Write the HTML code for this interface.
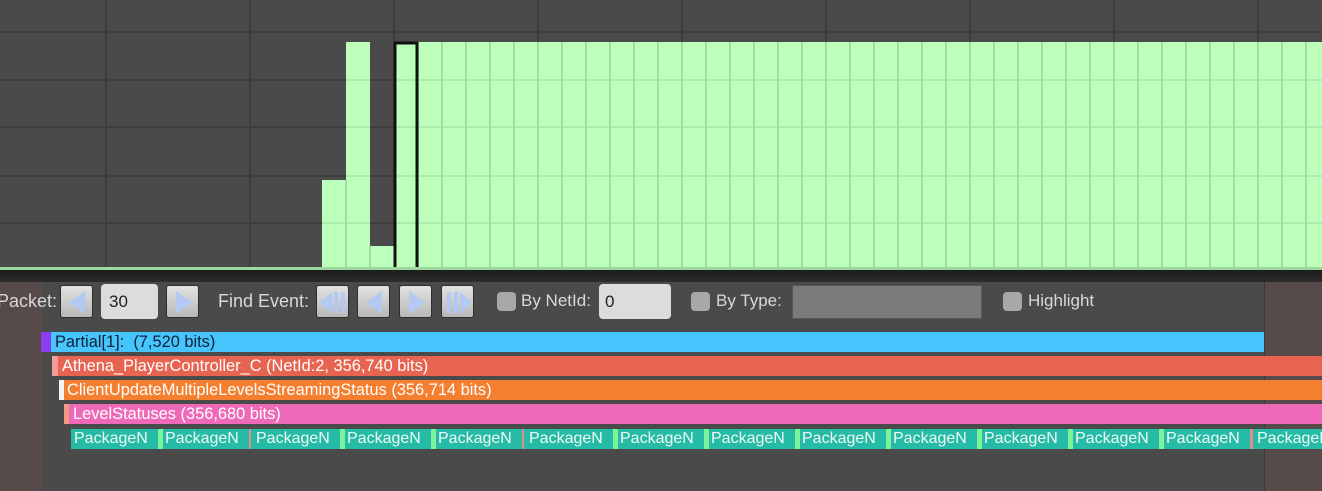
<!DOCTYPE html>
<html><head><meta charset="utf-8"><style>
*{margin:0;padding:0;box-sizing:border-box}
body{width:1322px;height:491px;overflow:hidden;background:#4a4a4a;position:relative;font-family:"Liberation Sans",sans-serif}
.a{position:absolute}
.t{position:absolute;color:#d8d8d8;font-size:17px;top:291px;white-space:nowrap}
.btn{position:absolute;top:285px;width:33px;height:33px;border-radius:3px;background:linear-gradient(#e2e2e2,#b8b8b8);border:1px solid #2e2e2e}
.btn svg{position:absolute;left:0;top:0}
.cb{position:absolute;top:292px;width:19px;height:19px;border-radius:4px;background:#a8a8a8}
.bar{position:absolute;height:20px;font-size:16.4px;line-height:20px;white-space:nowrap;color:#fff}
.pk{position:absolute;top:429px;height:20px;font-size:16px;line-height:20px;color:#eefaf6}
</style></head><body>
<svg class="a" style="left:0;top:0" width="1322" height="270">
<defs><clipPath id="bc">
<rect x="322" y="180" width="24" height="90"/>
<rect x="346" y="42" width="24" height="228"/>
<rect x="370" y="246" width="24" height="24"/>
<rect x="394" y="42" width="928" height="228"/>
</clipPath></defs>
<rect width="1322" height="270" fill="#4a4a4a"/>
<g stroke="#3e3e3e" stroke-width="2">
<line x1="0" y1="32" x2="1322" y2="32"/><line x1="0" y1="80" x2="1322" y2="80"/><line x1="0" y1="127" x2="1322" y2="127"/><line x1="0" y1="176" x2="1322" y2="176"/><line x1="0" y1="223" x2="1322" y2="223"/>
<line x1="106" y1="0" x2="106" y2="270"/><line x1="250" y1="0" x2="250" y2="270"/><line x1="394" y1="0" x2="394" y2="270"/><line x1="538" y1="0" x2="538" y2="270"/><line x1="682" y1="0" x2="682" y2="270"/><line x1="826" y1="0" x2="826" y2="270"/><line x1="970" y1="0" x2="970" y2="270"/><line x1="1114" y1="0" x2="1114" y2="270"/><line x1="1258" y1="0" x2="1258" y2="270"/>
</g>
<g fill="#bbffbb">
<rect x="322" y="180" width="24" height="90"/>
<rect x="346" y="42" width="24" height="228"/>
<rect x="370" y="246" width="24" height="24"/>
<rect x="394" y="42" width="928" height="228"/>
</g>
<g stroke="#a4dca4" stroke-width="2" clip-path="url(#bc)">
<g stroke-opacity=".6"><line x1="0" y1="80" x2="1322" y2="80"/><line x1="0" y1="127" x2="1322" y2="127"/><line x1="0" y1="176" x2="1322" y2="176"/><line x1="0" y1="223" x2="1322" y2="223"/></g>
<line x1="346" y1="180" x2="346" y2="270"/><line x1="370" y1="246" x2="370" y2="270"/>
<path d="M418 42V270M442 42V270M466 42V270M490 42V270M514 42V270M538 42V270M562 42V270M586 42V270M610 42V270M634 42V270M658 42V270M682 42V270M706 42V270M730 42V270M754 42V270M778 42V270M802 42V270M826 42V270M850 42V270M874 42V270M898 42V270M922 42V270M946 42V270M970 42V270M994 42V270M1018 42V270M1042 42V270M1066 42V270M1090 42V270M1114 42V270M1138 42V270M1162 42V270M1186 42V270M1210 42V270M1234 42V270M1258 42V270M1282 42V270M1306 42V270"/>
</g>
<rect x="395" y="43" width="22" height="226" fill="none" stroke="#111" stroke-width="3"/>
<rect x="0" y="267" width="1322" height="3" fill="#9fd89f"/>
</svg>
<div class="a" style="left:0;top:270px;width:1322px;height:12px;background:linear-gradient(#1c1c1c,#2c2c2c)"></div>
<div class="a" style="left:0;top:282px;width:42px;height:209px;background:#574a4a"></div>
<div class="a" style="left:1265px;top:282px;width:57px;height:209px;background:#574a4a"></div>
<div class="a" style="left:1264px;top:282px;width:1px;height:209px;background:#3e3a3a"></div>
<div class="t" style="left:-3px;font-size:18px">Packet:</div>
<div class="btn" style="left:60px"><svg width="33" height="33"><path d="M8 16.5L24 5V28Z" fill="#b4c8f4"/></svg></div>
<div class="a" style="left:101px;top:284px;width:57px;height:35px;border-radius:4px;background:#dcdcdc;font-size:17px;line-height:35px;padding-left:8px;color:#222">30</div>
<div class="btn" style="left:166px"><svg width="33" height="33"><path d="M25 16.5L9 5V28Z" fill="#b4c8f4"/></svg></div>
<div class="t" style="left:218px;font-size:18px">Find Event:</div>
<div class="btn" style="left:316px"><svg width="33" height="33"><path d="M3 16.5L15 6V27Z M17 6h4v21h-4z M24 6h4v21h-4z" fill="#b4c8f4"/></svg></div>
<div class="btn" style="left:357px"><svg width="33" height="33"><path d="M8 16.5L24 5V28Z" fill="#b4c8f4"/></svg></div>
<div class="btn" style="left:399px"><svg width="33" height="33"><path d="M25 16.5L9 5V28Z" fill="#b4c8f4"/></svg></div>
<div class="btn" style="left:441px"><svg width="33" height="33"><path d="M30 16.5L18 6V27Z M5 6h4v21h-4z M12 6h4v21h-4z" fill="#b4c8f4"/></svg></div>
<div class="cb" style="left:497px"></div>
<div class="t" style="left:521px">By NetId:</div>
<div class="a" style="left:599px;top:284px;width:72px;height:35px;border-radius:4px;background:#dcdcdc;font-size:17px;line-height:35px;padding-left:6px;color:#222">0</div>
<div class="cb" style="left:691px"></div>
<div class="t" style="left:716px">By Type:</div>
<div class="a" style="left:792px;top:285px;width:190px;height:34px;background:#7b7b7b;border:1px solid #555"></div>
<div class="cb" style="left:1003px"></div>
<div class="t" style="left:1028px">Highlight</div>
<div class="bar" style="left:41px;top:332px;width:1223px;background:#45c5fb;color:#10203a;border-left:10px solid #8a3cf0;padding-left:4px">Partial[1]:&nbsp; (7,520 bits)</div>
<div class="bar" style="left:52px;top:356px;width:1270px;background:#e76450;border-left:6px solid #f49a9a;padding-left:4px">Athena_PlayerController_C (NetId:2, 356,740 bits)</div>
<div class="bar" style="left:59px;top:380px;width:1263px;background:#f47f30;border-left:5px solid #f4f4f4;padding-left:3px">ClientUpdateMultipleLevelsStreamingStatus (356,714 bits)</div>
<div class="bar" style="left:64px;top:404px;width:1258px;background:#ee6ab8;border-left:5px solid #f49a80;padding-left:4px">LevelStatuses (356,680 bits)</div>
<div class="a" style="left:71px;top:429px;width:1251px;height:20px;background:#26bba6"></div>
<div class="a" style="left:158px;top:429px;width:5px;height:20px;background:#7cf29a"></div>
<div class="a" style="left:249px;top:429px;width:2px;height:20px;background:#e88a8a"></div>
<div class="a" style="left:340px;top:429px;width:5px;height:20px;background:#7cf29a"></div>
<div class="a" style="left:431px;top:429px;width:5px;height:20px;background:#7cf29a"></div>
<div class="a" style="left:522px;top:429px;width:2px;height:20px;background:#e88a8a"></div>
<div class="a" style="left:613px;top:429px;width:5px;height:20px;background:#7cf29a"></div>
<div class="a" style="left:704px;top:429px;width:5px;height:20px;background:#7cf29a"></div>
<div class="a" style="left:795px;top:429px;width:5px;height:20px;background:#7cf29a"></div>
<div class="a" style="left:886px;top:429px;width:5px;height:20px;background:#7cf29a"></div>
<div class="a" style="left:977px;top:429px;width:5px;height:20px;background:#7cf29a"></div>
<div class="a" style="left:1068px;top:429px;width:5px;height:20px;background:#7cf29a"></div>
<div class="a" style="left:1159px;top:429px;width:5px;height:20px;background:#7cf29a"></div>
<div class="a" style="left:1250px;top:429px;width:3px;height:20px;background:#e88a8a"></div>
<div class="pk" style="left:74px">PackageN</div>
<div class="pk" style="left:165px">PackageN</div>
<div class="pk" style="left:256px">PackageN</div>
<div class="pk" style="left:347px">PackageN</div>
<div class="pk" style="left:438px">PackageN</div>
<div class="pk" style="left:529px">PackageN</div>
<div class="pk" style="left:620px">PackageN</div>
<div class="pk" style="left:711px">PackageN</div>
<div class="pk" style="left:802px">PackageN</div>
<div class="pk" style="left:893px">PackageN</div>
<div class="pk" style="left:984px">PackageN</div>
<div class="pk" style="left:1075px">PackageN</div>
<div class="pk" style="left:1166px">PackageN</div>
<div class="pk" style="left:1257px">PackageN</div>
</body></html>
